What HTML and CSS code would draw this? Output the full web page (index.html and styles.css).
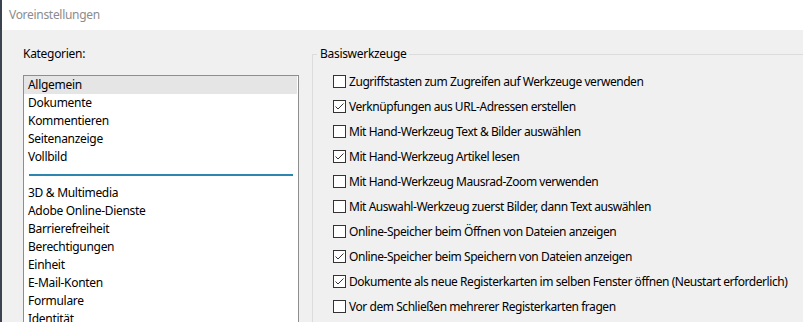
FILE: index.html
```html
<!DOCTYPE html>
<html lang="de">
<head>
    <meta charset="UTF-8">
    <title>Voreinstellungen</title>
    <link rel="stylesheet" href="styles.css">
</head>
<body>
    <div class="window">
        <div class="titlebar">Voreinstellungen</div>

        <div class="content">
            <div class="categories">
                <div class="cat-label">Kategorien:</div>
                <ul class="listbox">
                    <li class="selected">Allgemein</li>
                    <li>Dokumente</li>
                    <li>Kommentieren</li>
                    <li>Seitenanzeige</li>
                    <li>Vollbild</li>
                    <li class="separator"></li>
                    <li>3D &amp; Multimedia</li>
                    <li>Adobe Online-Dienste</li>
                    <li>Barrierefreiheit</li>
                    <li>Berechtigungen</li>
                    <li>Einheit</li>
                    <li>E-Mail-Konten</li>
                    <li>Formulare</li>
                    <li>Identität</li>
                </ul>
            </div>

            <fieldset class="group">
                <legend>Basiswerkzeuge</legend>
                <label class="option"><span class="box"></span>Zugriffstasten zum Zugreifen auf Werkzeuge verwenden</label>
                <label class="option"><span class="box checked"><svg viewBox="0 0 11 11"><polyline points="1.5,5.5 4,8 9.5,2.5"/></svg></span>Verknüpfungen aus URL-Adressen erstellen</label>
                <label class="option"><span class="box"></span>Mit Hand-Werkzeug Text &amp; Bilder auswählen</label>
                <label class="option"><span class="box checked"><svg viewBox="0 0 11 11"><polyline points="1.5,5.5 4,8 9.5,2.5"/></svg></span>Mit Hand-Werkzeug Artikel lesen</label>
                <label class="option"><span class="box"></span>Mit Hand-Werkzeug Mausrad-Zoom verwenden</label>
                <label class="option"><span class="box"></span>Mit Auswahl-Werkzeug zuerst Bilder, dann Text auswählen</label>
                <label class="option"><span class="box"></span>Online-Speicher beim Öffnen von Dateien anzeigen</label>
                <label class="option"><span class="box checked"><svg viewBox="0 0 11 11"><polyline points="1.5,5.5 4,8 9.5,2.5"/></svg></span>Online-Speicher beim Speichern von Dateien anzeigen</label>
                <label class="option"><span class="box checked"><svg viewBox="0 0 11 11"><polyline points="1.5,5.5 4,8 9.5,2.5"/></svg></span>Dokumente als neue Registerkarten im selben Fenster öffnen (Neustart erforderlich)</label>
                <label class="option"><span class="box"></span>Vor dem Schließen mehrerer Registerkarten fragen</label>
            </fieldset>
        </div>
    </div>
</body>
</html>
```

FILE: styles.css
```css
body {
    margin: 0;
    font-family: 'Noto Sans', 'Open Sans', sans-serif;
    font-size: 12px;
    letter-spacing: -0.3px;
    color: #000;
    background: #f0f0f0;
    overflow: hidden;
}
.window {
    border-left: 2px solid #3b4350;
    height: 322px;
    box-sizing: border-box;
    overflow: hidden;
}
.titlebar {
    height: 30px;
    line-height: 30px;
    padding-left: 7px;
    background: #fff;
    color: #8c8c8c;
}
.content {
    display: flex;
    align-items: flex-start;
    padding: 15px 0 0 21px;
}
.categories {
    width: 276px;
}
.cat-label {
    height: 30px;
    line-height: 18px;
}
.listbox {
    list-style: none;
    margin: 0;
    padding: 0;
    height: 300px;
    background: #fff;
    border: 1px solid #8e8e8e;
}
.listbox li {
    height: 18px;
    line-height: 18px;
    padding-left: 4px;
    white-space: nowrap;
}
.listbox li.selected {
    background: #e5e5e5;
    margin-right: 1px;
}
.listbox li.separator {
    position: relative;
}
.listbox li.separator::after {
    content: "";
    position: absolute;
    left: 5px;
    right: 5px;
    top: 8px;
    height: 2px;
    background: #2c86b0;
}
.group {
    margin: 1px 0 0 13px;
    padding: 7px 0 0 0;
    border: 1px solid #dcdcdc;
    border-right: none;
    flex: 1;
    min-width: 0;
    height: 300px;
}
.group legend {
    padding: 0 3px;
    margin-left: 4px;
    line-height: 16px;
}
.option {
    display: flex;
    align-items: center;
    height: 25px;
    padding-left: 20px;
    white-space: nowrap;
    letter-spacing: -0.45px;
}
.box {
    width: 11px;
    height: 11px;
    border: 1px solid #333;
    background: #fff;
    margin-right: 3px;
    flex: none;
}
.box svg {
    display: block;
    width: 11px;
    height: 11px;
}
.box polyline {
    fill: none;
    stroke: #333;
    stroke-width: 1;
}
```
